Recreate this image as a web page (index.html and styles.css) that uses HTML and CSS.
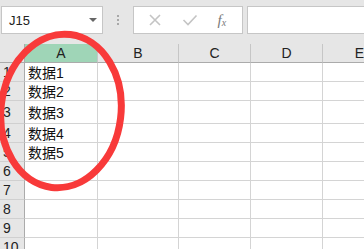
FILE: index.html
```html
<!DOCTYPE html>
<html lang="zh">
<head>
    <meta charset="UTF-8">
    <title>Sheet</title>
    <link rel="stylesheet" href="styles.css">
</head>
<body>

<div class="toolbar">
    <div class="name-box">
        <span>J15</span>
        <span class="caret"></span>
    </div>
    <div class="dots"><i></i><i></i><i></i></div>
    <div class="fx-buttons">
        <svg width="14" height="14" viewBox="0 0 14 14"><path d="M2 2L12 12M12 2L2 12" stroke="#c4c4c4" stroke-width="1.6" fill="none"/></svg>
        <svg width="16" height="14" viewBox="0 0 16 14"><path d="M1.5 7L6 11.5L14.5 2.5" stroke="#c4c4c4" stroke-width="1.6" fill="none"/></svg>
        <span class="fx">f<sub>x</sub></span>
    </div>
    <div class="formula"></div>
</div>

<div class="sheet">
    <div class="row head">
        <div class="rh"></div>
        <div class="c a sel">A</div>
        <div class="c b">B</div>
        <div class="c">C</div>
        <div class="c">D</div>
        <div class="c e">E</div>
    </div>
    <div class="row"><div class="rh">1</div><div class="c a">数据1</div><div class="c b"></div><div class="c"></div><div class="c"></div><div class="c e"></div></div>
    <div class="row"><div class="rh">2</div><div class="c a">数据2</div><div class="c b"></div><div class="c"></div><div class="c"></div><div class="c e"></div></div>
    <div class="row tall"><div class="rh">3</div><div class="c a">数据3</div><div class="c b"></div><div class="c"></div><div class="c"></div><div class="c e"></div></div>
    <div class="row"><div class="rh">4</div><div class="c a">数据4</div><div class="c b"></div><div class="c"></div><div class="c"></div><div class="c e"></div></div>
    <div class="row"><div class="rh">5</div><div class="c a">数据5</div><div class="c b"></div><div class="c"></div><div class="c"></div><div class="c e"></div></div>
    <div class="row"><div class="rh">6</div><div class="c a"></div><div class="c b"></div><div class="c"></div><div class="c"></div><div class="c e"></div></div>
    <div class="row"><div class="rh">7</div><div class="c a"></div><div class="c b"></div><div class="c"></div><div class="c"></div><div class="c e"></div></div>
    <div class="row"><div class="rh">8</div><div class="c a"></div><div class="c b"></div><div class="c"></div><div class="c"></div><div class="c e"></div></div>
    <div class="row"><div class="rh">9</div><div class="c a"></div><div class="c b"></div><div class="c"></div><div class="c"></div><div class="c e"></div></div>
    <div class="row"><div class="rh">10</div><div class="c a"></div><div class="c b"></div><div class="c"></div><div class="c"></div><div class="c e"></div></div>
</div>

<svg class="circle" width="140" height="210" viewBox="0 0 140 210">
    <ellipse cx="61" cy="111" rx="60" ry="77" transform="rotate(7 61 111)" fill="none" stroke="#f83a3a" stroke-width="7"/>
</svg>

</body>
</html>
```

FILE: styles.css
```css
body {
    margin: 0;
    width: 364px;
    height: 249px;
    overflow: hidden;
    background: #fff;
    position: relative;
    font-family: "Liberation Sans", "Noto Sans CJK SC", sans-serif;
}
.toolbar {
    display: flex;
    align-items: flex-start;
    height: 44px;
    padding: 6px 0 0 1px;
    box-sizing: border-box;
    background: #e6e6e6;
}
.name-box {
    width: 102px;
    height: 28px;
    box-sizing: border-box;
    border: 1px solid #c6c6c6;
    background: #fff;
    display: flex;
    align-items: center;
    justify-content: space-between;
    padding: 0 5px 0 7px;
    font-size: 13px;
    color: #222;
}
.caret {
    width: 0;
    height: 0;
    border-left: 4px solid transparent;
    border-right: 4px solid transparent;
    border-top: 4px solid #666;
}
.dots {
    width: 30px;
    height: 28px;
    display: flex;
    flex-direction: column;
    align-items: center;
    justify-content: center;
    gap: 2px;
}
.dots i {
    width: 2px;
    height: 2px;
    background: #a8a8a8;
}
.fx-buttons {
    width: 110px;
    height: 28px;
    box-sizing: border-box;
    border: 1px solid #c6c6c6;
    background: #fff;
    display: flex;
    align-items: center;
    justify-content: space-around;
    padding: 0 6px 0 4px;
}
.fx {
    font-family: "Liberation Serif", serif;
    font-style: italic;
    font-size: 15px;
    color: #7a7a7a;
    line-height: 1;
}
.fx sub {
    font-size: 10px;
    vertical-align: -1px;
}
.formula {
    flex: 1;
    height: 28px;
    margin-left: 4px;
    box-sizing: border-box;
    border: 1px solid #c6c6c6;
    border-right: none;
    background: #fff;
}
.row {
    display: flex;
    height: 19px;
}
.row.tall {
    height: 23px;
}
.rh, .c {
    box-sizing: border-box;
    border-right: 1px solid #d4d4d4;
    border-bottom: 1px solid #d4d4d4;
    display: flex;
    align-items: center;
}
.rh {
    width: 25px;
    background: #e6e6e6;
    border-right-color: #ababab;
    border-bottom-color: #d0d0d0;
    padding-left: 3px;
    font-size: 14px;
    color: #222;
}
.c {
    width: 72px;
    padding-left: 3px;
    font-size: 14px;
    color: #111;
}
.c.a { width: 73px; }
.c.b { width: 81px; }
.c.e { flex: 1; border-right: none; }
.head {
    height: 19px;
    background: #e6e6e6;
}
.head .c, .head .rh {
    justify-content: center;
    padding-left: 0;
    border-bottom: 1px solid #ababab;
    border-right-color: #c6c6c6;
    font-size: 14px;
    color: #222;
}
.head .rh {
    border-right-color: #ababab;
}
.head .c.e {
    justify-content: flex-end;
}
.head .sel {
    background: #9fd5b7;
}
.circle {
    position: absolute;
    left: 0;
    top: 0;
}
```
